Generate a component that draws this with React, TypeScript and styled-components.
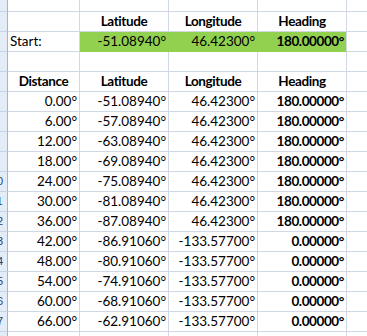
import React from "react";
import styled, { createGlobalStyle, css } from "styled-components";

const GRID = "#d0d7e5";
const FILL = "#92d050";

const GlobalStyle = createGlobalStyle`
  html, body {
    margin: 0;
    padding: 0;
    background: #ffffff;
    overflow: hidden;
  }
  body {
    font-family: Lato, "Liberation Sans", Arial, sans-serif;
    color: #000000;
  }
`;

const Sheet = styled.div`
  display: grid;
  grid-template-columns: 8px 72px 89px 89px 89px 1fr;
  grid-template-rows: 12px;
  grid-auto-rows: 20px;
  width: 367px;
  height: 336px;
  overflow: hidden;
`;

const RowHeader = styled.div`
  box-sizing: border-box;
  display: flex;
  justify-content: flex-end;
  overflow: hidden;
  background: #e4ecf7;
  border-right: 1px solid #9eb6ce;
  border-bottom: 1px solid #c5d3e4;
`;

const RowNumber = styled.span`
  flex: 0 0 20px;
  text-align: center;
  font-family: "Liberation Sans", Arial, sans-serif;
  font-size: 11px;
  line-height: 19px;
  color: #27416b;
`;

const Cell = styled.div<{
  $align?: "left" | "center" | "right";
  $bold?: boolean;
  $fill?: boolean;
  $last?: boolean;
  $joined?: boolean;
}>`
  box-sizing: border-box;
  padding: 0 2px;
  font-size: 13.5px;
  line-height: 19px;
  white-space: nowrap;
  overflow: hidden;
  text-align: ${(p) => p.$align || "left"};
  border-bottom: 1px solid ${GRID};
  border-right: ${(p) => (p.$last ? "none" : `1px solid ${GRID}`)};
  ${(p) =>
    p.$bold &&
    css`
      font-weight: bold;
      letter-spacing: -0.4px;
    `}
  ${(p) =>
    p.$fill &&
    css`
      background: ${FILL};
      border-bottom-color: ${FILL};
    `}
  ${(p) =>
    p.$joined &&
    css`
      border-right-color: ${FILL};
    `}
`;

const deg = (v: number, digits: number) => `${v.toFixed(digits)}°`;

type Row = { distance: number; lat: number; lon: number; heading: number };

const rows: Row[] = Array.from({ length: 12 }, (_, i) => {
  const distance = i * 6;
  let lat = -51.0894 - distance;
  let lon = 46.423;
  let heading = 180;
  if (lat < -90) {
    lat = -180 - lat;
    lon = lon - 180;
    heading = 0;
  }
  return { distance, lat, lon, heading };
});

const Header: React.FC<{ n: number }> = ({ n }) => (
  <RowHeader>
    <RowNumber>{n}</RowNumber>
  </RowHeader>
);

const Empty: React.FC<{ n: number }> = ({ n }) => (
  <>
    <Header n={n} />
    <Cell />
    <Cell />
    <Cell />
    <Cell />
    <Cell $last />
  </>
);

const App: React.FC = () => {
  return (
    <>
      <GlobalStyle />
      <Sheet>
        <Empty n={1} />

        <Header n={2} />
        <Cell />
        <Cell $align="center" $bold>Latitude</Cell>
        <Cell $align="center" $bold>Longitude</Cell>
        <Cell $align="center" $bold>Heading</Cell>
        <Cell $last />

        <Header n={3} />
        <Cell>Start:</Cell>
        <Cell $align="right" $fill $joined>{deg(-51.0894, 5)}</Cell>
        <Cell $align="right" $fill $joined>{deg(46.423, 5)}</Cell>
        <Cell $align="right" $fill $bold>{deg(180, 5)}</Cell>
        <Cell $last />

        <Empty n={4} />

        <Header n={5} />
        <Cell $align="center" $bold>Distance</Cell>
        <Cell $align="center" $bold>Latitude</Cell>
        <Cell $align="center" $bold>Longitude</Cell>
        <Cell $align="center" $bold>Heading</Cell>
        <Cell $last />

        {rows.map((r, i) => (
          <React.Fragment key={r.distance}>
            <Header n={i + 6} />
            <Cell $align="right">{deg(r.distance, 2)}</Cell>
            <Cell $align="right">{deg(r.lat, 5)}</Cell>
            <Cell $align="right">{deg(r.lon, 5)}</Cell>
            <Cell $align="right" $bold>{deg(r.heading, 5)}</Cell>
            <Cell $last />
          </React.Fragment>
        ))}

        <Empty n={18} />
      </Sheet>
    </>
  );
};

export default App;
